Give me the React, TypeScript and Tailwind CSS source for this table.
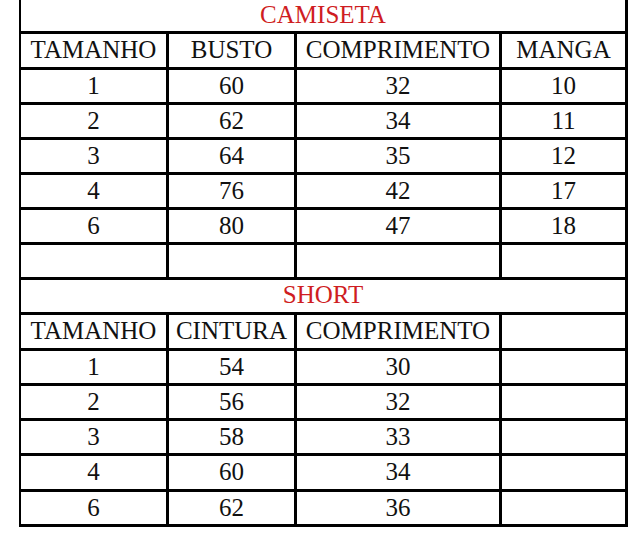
import React from 'react';

type Row = { cells: string[]; h: string };

const camiseta: Row[] = [
  { cells: ['TAMANHO', 'BUSTO', 'COMPRIMENTO', 'MANGA'], h: 'h-[36px]' },
  { cells: ['1', '60', '32', '10'], h: 'h-[35px]' },
  { cells: ['2', '62', '34', '11'], h: 'h-[35px]' },
  { cells: ['3', '64', '35', '12'], h: 'h-[35px]' },
  { cells: ['4', '76', '42', '17'], h: 'h-[35px]' },
  { cells: ['6', '80', '47', '18'], h: 'h-[35px]' },
  { cells: ['', '', '', ''], h: 'h-[35px]' },
];

const short: Row[] = [
  { cells: ['TAMANHO', 'CINTURA', 'COMPRIMENTO', ''], h: 'h-[36px]' },
  { cells: ['1', '54', '30', ''], h: 'h-[35px]' },
  { cells: ['2', '56', '32', ''], h: 'h-[35px]' },
  { cells: ['3', '58', '33', ''], h: 'h-[35px]' },
  { cells: ['4', '60', '34', ''], h: 'h-[36px]' },
  { cells: ['6', '62', '36', ''], h: 'h-[35px]' },
];

function DataRow({ row }: { row: Row }) {
  return (
    <div className={`grid grid-cols-[148px_128px_205px_1fr] border-b-[3px] border-black ${row.h}`}>
      {row.cells.map((c, i) => (
        <div
          key={i}
          className={`flex items-center justify-center pb-[2px] ${i < 3 ? 'border-r-[3px] border-black' : ''}`}
        >
          {c}
        </div>
      ))}
    </div>
  );
}

function TitleRow({ title, h }: { title: string; h: string }) {
  return (
    <div className={`flex items-center justify-center pb-[3px] border-b-[3px] border-black text-[#cf1d22] ${h}`}>
      {title}
    </div>
  );
}

export default function App() {
  return (
    <div className="w-[632px] h-[536px] bg-white overflow-hidden">
      <div
        className="ml-[19px] w-[609px] border-l-2 border-r-[3px] border-black text-[25px] leading-none text-[#111]"
        style={{ fontFamily: '"Liberation Serif", "Times New Roman", serif' }}
      >
        <TitleRow title="CAMISETA" h="h-[34px]" />
        {camiseta.map((r, i) => (
          <DataRow key={i} row={r} />
        ))}
        <TitleRow title="SHORT" h="h-[35px]" />
        {short.map((r, i) => (
          <DataRow key={i} row={r} />
        ))}
      </div>
    </div>
  );
}
